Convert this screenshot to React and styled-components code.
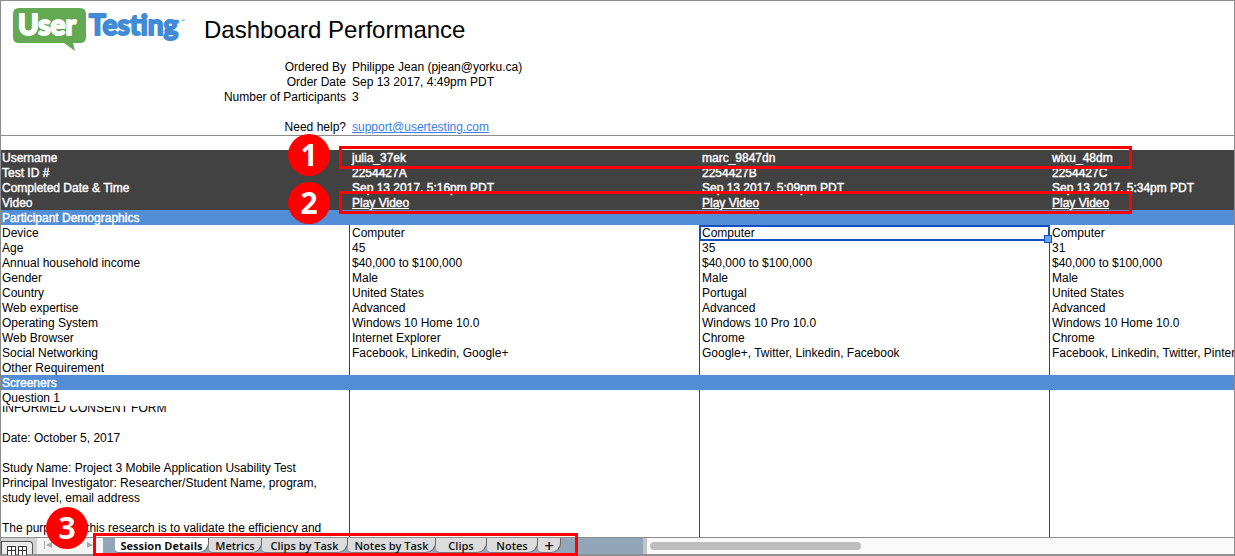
import React from 'react';
import styled, { createGlobalStyle } from 'styled-components';

const GlobalStyle = createGlobalStyle`
  * { box-sizing: border-box; }
  html, body { margin: 0; background: #fff; }
  body {
    font-family: "Liberation Sans", Arial, Helvetica, sans-serif;
    font-size: 12px;
    line-height: 15px;
    color: #000;
  }
`;

const Window = styled.main`
  position: relative;
  display: flex;
  flex-direction: column;
  min-height: 100vh;
  overflow: hidden;
  border: 1px solid #8c8c8c;
  border-bottom: 0;
`;

const Header = styled.header`
  padding: 6px 12px 0;
  border-bottom: 1px solid #8c8c8c;
`;

const Brand = styled.div`
  display: flex;
  align-items: center;
  gap: 17px;
  height: 46px;
`;

const Logo = styled.svg`
  flex: none;
  width: 174px;
  height: 46px;
  overflow: visible;
  font-family: Lato, sans-serif;
  font-weight: 700;
  font-size: 28px;
`;

const Title = styled.h1`
  margin: 0;
  font-size: 24px;
  line-height: 30px;
  font-weight: 400;
`;

const Facts = styled.dl`
  display: grid;
  grid-template-columns: 333px 1fr;
  column-gap: 6px;
  margin: 7px 0 0;
`;

const FactName = styled.dt`
  text-align: right;
  margin-top: ${(p) => (p.$apart ? '15px' : '0')};
`;

const FactValue = styled.dd`
  margin: 0;
  margin-top: ${(p) => (p.$apart ? '15px' : '0')};
`;

const MailLink = styled.a`
  color: #3b7ded;
`;

const SheetView = styled.section`
  flex: 1;
  overflow: hidden;
  padding-top: 14px;
`;

const Sheet = styled.table`
  table-layout: fixed;
  width: 1399px;
  border-collapse: separate;
  border-spacing: 0;
  line-height: 14px;
`;

const Column = styled.col`
  width: ${(p) => (p.$first ? '349px' : '350px')};
`;

const DarkRow = styled.tr`
  background: #424242;
  color: #fff;
`;

const BandRow = styled.tr`
  background: #528dd6;
  color: #fff;
`;

const HeadCell = styled.th`
  height: 15px;
  padding: 1px 1px 0;
  text-align: left;
  font-weight: 400;
  white-space: nowrap;
  -webkit-text-stroke: ${(p) => (p.$strong ? '0.4px #fff' : '0')};
  border-right: ${(p) => (p.$ruled ? '1px solid #444' : '0')};
`;

const Cell = styled.td`
  position: relative;
  height: 15px;
  padding: 1px 2px 0;
  vertical-align: top;
  white-space: nowrap;
  -webkit-text-stroke: ${(p) => (p.$strong ? '0.4px #fff' : '0')};
  border-right: ${(p) => (p.$ruled ? '1px solid #444' : '0')};
`;

const PlayLink = styled.a`
  color: #fff;
`;

const Selection = styled.span`
  position: absolute;
  z-index: 1;
  inset: 0 -1px -1px -1px;
  border: 2px solid #1150c4;
  &::after {
    content: "";
    position: absolute;
    right: -4px;
    bottom: -4px;
    width: 6px;
    height: 6px;
    background: #6aa4ee;
    border: 1px solid #1150c4;
  }
`;

const ConsentText = styled.div`
  display: flex;
  flex-direction: column;
  justify-content: flex-end;
  height: 131px;
  padding-bottom: 1px;
  overflow: hidden;
  line-height: 15px;
  white-space: pre-line;
`;

const StatusBar = styled.footer`
  position: relative;
  display: flex;
  height: 19px;
  border-top: 1px solid #8c8c8c;
  border-bottom: 2px solid #8f8f8f;
  background: #93a5b8;
`;

const ViewPane = styled.div`
  display: flex;
  align-items: flex-end;
  width: 36px;
  background: #d2d2d2;
`;

const ViewButton = styled.button`
  display: flex;
  justify-content: center;
  width: 32px;
  height: 13px;
  padding: 4px 0 0;
  border: 1px solid #555;
  border-bottom: 0;
  border-radius: 0 4px 0 0;
  background: #ececec;
`;

const Arrows = styled.nav`
  display: flex;
  align-items: center;
  justify-content: space-between;
  width: 66px;
  padding: 0 10px 2px 6px;
  background: #f4f4f4;
`;

const ArrowButton = styled.button`
  display: flex;
  padding: 0;
  border: 0;
  background: none;
`;

const Tabs = styled.div`
  display: flex;
  padding-left: 12px;
  height: 15px;
`;

const Tab = styled.button`
  flex: none;
  width: ${(p) => p.$width}px;
  padding: 0;
  border: 0;
  border-right: 1px solid #666;
  border-bottom: 1px solid #777;
  border-radius: 0 0 10px 4px;
  background: ${(p) => (p.$active ? '#fff' : '#dcdcdc')};
  color: #111;
  font-family: "Open Sans", sans-serif;
  font-size: ${(p) => (p.$add ? 17 : 11)}px;
  line-height: 13px;
  font-weight: ${(p) => (p.$active ? 700 : 600)};
  white-space: nowrap;
`;

const Scroller = styled.div`
  position: absolute;
  inset: 0 0 0 642px;
  padding: 4px 3px;
  border-left: 4px solid #c4c4c4;
  background: #fafafa;
`;

const Thumb = styled.div`
  width: 211px;
  height: 8px;
  border-radius: 4px;
  background: #bdbdbd;
`;

const Frame = styled.div`
  position: absolute;
  z-index: 2;
  left: ${(p) => p.$left}px;
  top: ${(p) => p.$top}px;
  width: ${(p) => p.$width}px;
  height: 23px;
  border: 3px solid #f00;
  pointer-events: none;
`;

const Badge = styled.span`
  position: absolute;
  z-index: 3;
  left: ${(p) => p.$left}px;
  top: ${(p) => p.$top}px;
  width: 42px;
  height: 42px;
  border-radius: 50%;
  background: #f00;
  color: #fff;
  font-family: "Open Sans", sans-serif;
  font-size: 30px;
  line-height: 42px;
  font-weight: 700;
  text-align: center;
`;

const sessions = [
  { user: 'julia_37ek', id: '2254427A', done: 'Sep 13 2017, 5:16pm PDT' },
  { user: 'marc_9847dn', id: '2254427B', done: 'Sep 13 2017, 5:09pm PDT' },
  { user: 'wixu_48dm', id: '2254427C', done: 'Sep 13 2017, 5:34pm PDT' },
];

const summary = [
  ['Username', 'user'],
  ['Test ID #', 'id'],
  ['Completed Date & Time', 'done'],
];

const demographics = [
  ['Device', 'Computer', 'Computer', 'Computer'],
  ['Age', '45', '35', '31'],
  ['Annual household income', '$40,000 to $100,000', '$40,000 to $100,000', '$40,000 to $100,000'],
  ['Gender', 'Male', 'Male', 'Male'],
  ['Country', 'United States', 'Portugal', 'United States'],
  ['Web expertise', 'Advanced', 'Advanced', 'Advanced'],
  ['Operating System', 'Windows 10 Home 10.0', 'Windows 10 Pro 10.0', 'Windows 10 Home 10.0'],
  ['Web Browser', 'Internet Explorer', 'Chrome', 'Chrome'],
  ['Social Networking', 'Facebook, Linkedin, Google+', 'Google+, Twitter, Linkedin, Facebook', 'Facebook, Linkedin, Twitter, Pinterest'],
  ['Other Requirement', '', '', ''],
];

const consent = `INFORMED CONSENT FORM

Date: October 5, 2017

Study Name: Project 3 Mobile Application Usability Test
Principal Investigator: Researcher/Student Name, program,
study level, email address

The purpose of this research is to validate the efficiency and`;

const tabs = [
  ['Session Details', 94],
  ['Metrics', 53],
  ['Clips by Task', 86],
  ['Notes by Task', 88],
  ['Clips', 51],
  ['Notes', 51],
  ['+', 23],
];

function DataRow({ cells, selected }) {
  return (
    <tr>
      <HeadCell scope="row" $ruled>{cells[0]}</HeadCell>
      {cells.slice(1).map((text, i) => (
        <Cell key={i} $ruled>
          {text}
          {selected === i && <Selection />}
        </Cell>
      ))}
    </tr>
  );
}

export default function App() {
  return (
    <Window>
      <GlobalStyle />
      <Header>
        <Brand>
          <Logo viewBox="0 0 174 46" role="img" aria-label="UserTesting">
            <path fill="#63a953" d="M6 1H67Q73 1 73 7V30Q73 36 67 36H60L62 44L51 36H6Q0 36 0 30V7Q0 1 6 1Z" />
            <g strokeWidth="2" strokeLinejoin="round">
              <text x="5" y="28" fill="#fff" stroke="#fff">User</text>
              <text x="76" y="28" fill="#3f8bd6" stroke="#3f8bd6">Testing</text>
            </g>
            <text x="168" y="16" fill="#3f8bd6" fontSize="5">™</text>
          </Logo>
          <Title>Dashboard Performance</Title>
        </Brand>
        <Facts>
          <FactName>Ordered By</FactName>
          <FactValue>Philippe Jean (pjean@yorku.ca)</FactValue>
          <FactName>Order Date</FactName>
          <FactValue>Sep 13 2017, 4:49pm PDT</FactValue>
          <FactName>Number of Participants</FactName>
          <FactValue>3</FactValue>
          <FactName $apart>Need help?</FactName>
          <FactValue $apart>
            <MailLink href="mailto:support@usertesting.com">support@usertesting.com</MailLink>
          </FactValue>
        </Facts>
      </Header>

      <SheetView>
        <Sheet>
          <colgroup>
            <Column $first />
            <Column />
            <Column />
            <Column />
          </colgroup>
          <tbody>
            {summary.map(([label, key]) => (
              <DarkRow key={key}>
                <HeadCell scope="row" $strong>{label}</HeadCell>
                {sessions.map((s) => <Cell key={s.id} $strong>{s[key]}</Cell>)}
              </DarkRow>
            ))}
            <DarkRow>
              <HeadCell scope="row" $strong>Video</HeadCell>
              {sessions.map((s) => (
                <Cell key={s.id} $strong><PlayLink href="#video">Play Video</PlayLink></Cell>
              ))}
            </DarkRow>
            <BandRow><HeadCell colSpan={4} $strong>Participant Demographics</HeadCell></BandRow>
            {demographics.map((cells, i) => (
              <DataRow key={cells[0]} cells={cells} selected={i === 0 ? 1 : -1} />
            ))}
            <BandRow><HeadCell colSpan={4} $strong>Screeners</HeadCell></BandRow>
            <DataRow cells={['Question 1', '', '', '']} />
            <DataRow cells={[<ConsentText key="consent">{consent}</ConsentText>, '', '', '']} />
          </tbody>
        </Sheet>
      </SheetView>

      <StatusBar>
        <ViewPane>
          <ViewButton aria-label="Normal view">
            <svg width="22" height="9" viewBox="0 0 22 9" fill="#fff" stroke="#333">
              <path d="M1.500 .5h8v9h-8zM5.500 .5v9M1.500 4.500h8M12.500 .5h8v9h-8zM16.500 .5v9M12.500 4.500h8" />
            </svg>
          </ViewButton>
        </ViewPane>
        <Arrows aria-label="Sheet navigation">
          <ArrowButton aria-label="First sheet">
            <svg width="10" height="8" viewBox="0 0 10 8" fill="#aaa"><path d="M1 0h1v8H1zM9 1v6L3 4z" /></svg>
          </ArrowButton>
          <ArrowButton aria-label="Next sheet">
            <svg width="6" height="8" viewBox="0 0 6 8" fill="#aaa"><path d="M0 1v6l6-3z" /></svg>
          </ArrowButton>
        </Arrows>
        <Tabs>
          {tabs.map(([name, width], i) => (
            <Tab key={name} $width={width} $active={i === 0} $add={name === '+'}>{name}</Tab>
          ))}
        </Tabs>
        <Scroller><Thumb /></Scroller>
        <Frame $left={92} $top={-5} $width={485} />
        <Badge $left={45} $top={-31}>3</Badge>
      </StatusBar>

      <Frame $left={338} $top={145} $width={793} />
      <Badge $left={287} $top={133}>1</Badge>
      <Frame $left={338} $top={190} $width={793} />
      <Badge $left={287} $top={181}>2</Badge>
    </Window>
  );
}
